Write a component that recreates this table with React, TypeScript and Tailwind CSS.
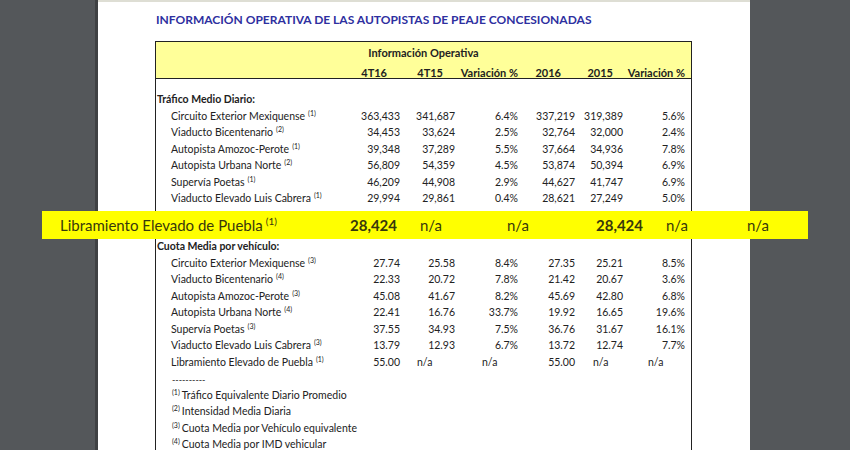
import React from "react";

const F = { fontFamily: "Lato, 'Liberation Sans', sans-serif" };

type Row = { label: string; sup: string; v: string[] };

const trafico: Row[] = [
  { label: "Circuito Exterior Mexiquense", sup: "(1)", v: ["363,433", "341,687", "6.4%", "337,219", "319,389", "5.6%"] },
  { label: "Viaducto Bicentenario", sup: "(2)", v: ["34,453", "33,624", "2.5%", "32,764", "32,000", "2.4%"] },
  { label: "Autopista Amozoc-Perote", sup: "(1)", v: ["39,348", "37,289", "5.5%", "37,664", "34,936", "7.8%"] },
  { label: "Autopista Urbana Norte", sup: "(2)", v: ["56,809", "54,359", "4.5%", "53,874", "50,394", "6.9%"] },
  { label: "Supervía Poetas", sup: "(1)", v: ["46,209", "44,908", "2.9%", "44,627", "41,747", "6.9%"] },
  { label: "Viaducto Elevado Luis Cabrera", sup: "(1)", v: ["29,994", "29,861", "0.4%", "28,621", "27,249", "5.0%"] },
];

const cuota: Row[] = [
  { label: "Circuito Exterior Mexiquense", sup: "(3)", v: ["27.74", "25.58", "8.4%", "27.35", "25.21", "8.5%"] },
  { label: "Viaducto Bicentenario", sup: "(4)", v: ["22.33", "20.72", "7.8%", "21.42", "20.67", "3.6%"] },
  { label: "Autopista Amozoc-Perote", sup: "(3)", v: ["45.08", "41.67", "8.2%", "45.69", "42.80", "6.8%"] },
  { label: "Autopista Urbana Norte", sup: "(4)", v: ["22.41", "16.76", "33.7%", "19.92", "16.65", "19.6%"] },
  { label: "Supervía Poetas", sup: "(3)", v: ["37.55", "34.93", "7.5%", "36.76", "31.67", "16.1%"] },
  { label: "Viaducto Elevado Luis Cabrera", sup: "(3)", v: ["13.79", "12.93", "6.7%", "13.72", "12.74", "7.7%"] },
];

const notes = [
  ["(1)", "Tráfico Equivalente Diario Promedio"],
  ["(2)", "Intensidad Media Diaria"],
  ["(3)", "Cuota Media por Vehículo equivalente"],
  ["(4)", "Cuota Media por IMD vehicular"],
];

const grid = "grid grid-cols-[189px_55px_55px_63px_57px_48px_62px]";

function Sup({ t }: { t: string }) {
  return <span className="relative -top-[4px] ml-[3px] text-[7px]">{t}</span>;
}

function DataRow({ r }: { r: Row }) {
  return (
    <div className={`${grid} h-[16.5px] items-center`}>
      <div className="pl-[15px] whitespace-nowrap">
        {r.label}
        <Sup t={r.sup} />
      </div>
      {r.v.map((x, i) => (
        <div key={i} className="text-right whitespace-nowrap">
          {x}
        </div>
      ))}
    </div>
  );
}

export default function App() {
  return (
    <div className="flex w-[850px] h-[450px] overflow-hidden bg-[#54575a] text-[#222222]" style={F}>
      <div className="w-[98px] shrink-0 flex">
        <div className="w-[95px] bg-[#54575a]" />
        <div className="w-[3px] bg-[#3f4143]" />
      </div>
      <div className="w-[652px] shrink-0 bg-white flex flex-col">
        <div className="h-[2px] shrink-0 bg-[#deded4]" />
        <div className="pl-[58px] pt-[9px] h-[39px] shrink-0 text-[12px] font-bold text-[#2e30a0] whitespace-nowrap">
          INFORMACIÓN OPERATIVA DE LAS AUTOPISTAS DE PEAJE CONCESIONADAS
        </div>
        <div className="ml-[57px] w-[537px] border-x border-[#222] text-[10.5px] flex-1 shrink-0">
          <div className="h-[38px] bg-[#ffff99] border-y border-[#222] font-bold text-[11px] flex flex-col">
            <div className="h-[17px] flex items-end justify-center leading-none">
              Información Operativa
            </div>
            <div className={`${grid} mt-[9px] leading-none`}>
              <div />
              <div className="text-right pr-[13px]">4T16</div>
              <div className="text-right pr-[12px]">4T15</div>
              <div className="text-right">Variación %</div>
              <div className="text-right pr-[14px]">2016</div>
              <div className="text-right pr-[10px]">2015</div>
              <div className="text-right">Variación %</div>
            </div>
          </div>
          <div className="h-[13px]" />
          <div className="h-[16.5px] flex items-center pl-[1px] font-bold">Tráfico Medio Diario:</div>
          {trafico.map((r) => (
            <DataRow key={r.label} r={r} />
          ))}
          <div className="relative z-10 mt-[3.5px] -ml-[114px] w-[766px] h-[28px] bg-[#ffff00] text-[#38380c] text-[15px] grid grid-cols-[308px_41px_89px_90px_73px_77px_88px] items-center whitespace-nowrap">
            <div className="pl-[18px]">
              Libramiento Elevado de Puebla
              <span className="relative -top-[6px] ml-[3px] text-[10px]">(1)</span>
            </div>
            <div className="text-right font-bold">28,424</div>
            <div className="pl-[29px]">n/a</div>
            <div className="pl-[27px]">n/a</div>
            <div className="text-right font-bold">28,424</div>
            <div className="pl-[23px]">n/a</div>
            <div className="pl-[27px]">n/a</div>
          </div>
          <div className="h-[16.5px] flex items-center pl-[1px] font-bold">Cuota Media por vehículo:</div>
          {cuota.map((r) => (
            <DataRow key={r.label} r={r} />
          ))}
          <div className={`${grid} h-[16.5px] items-center`}>
            <div className="pl-[15px] whitespace-nowrap">
              Libramiento Elevado de Puebla
              <Sup t="(1)" />
            </div>
            <div className="text-right">55.00</div>
            <div className="pl-[17px]">n/a</div>
            <div className="pl-[27px]">n/a</div>
            <div className="text-right">55.00</div>
            <div className="pl-[18px]">n/a</div>
            <div className="pl-[25px]">n/a</div>
          </div>
          <div className="h-[16.5px] flex items-center pl-[16px] text-[9px]">----------</div>
          {notes.map(([s, t]) => (
            <div key={s} className="h-[16.5px] flex items-center pl-[16px] whitespace-nowrap">
              <span className="relative -top-[4px] mr-[2px] text-[7px]">{s}</span>
              {t}
            </div>
          ))}
        </div>
      </div>
      <div className="w-[100px] shrink-0 bg-[#54575a]" />
    </div>
  );
}
